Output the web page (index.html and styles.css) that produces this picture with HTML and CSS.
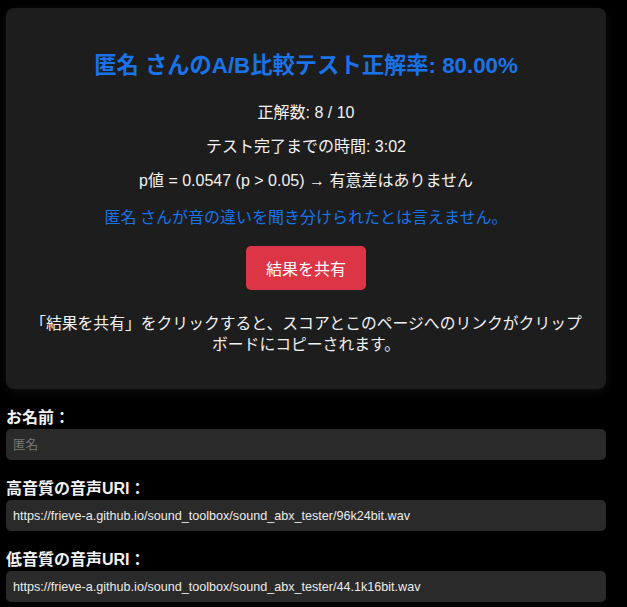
FILE: index.html
```html
<!DOCTYPE html>
<html lang="ja">
<head>
<meta charset="utf-8">
<title>A/B比較テスト</title>
<link rel="stylesheet" href="styles.css">
</head>
<body>
<div class="page">
  <section class="card">
    <h2 class="title">匿名 さんのA/B比較テスト正解率: 80.00%</h2>
    <p class="line">正解数: 8 / 10</p>
    <p class="line">テスト完了までの時間: 3:02</p>
    <p class="line">p値 = 0.0547 (p &gt; 0.05) → 有意差はありません</p>
    <p class="line verdict">匿名 さんが音の違いを聞き分けられたとは言えません。</p>
    <div class="actions"><button class="share">結果を共有</button></div>
    <p class="note">「結果を共有」をクリックすると、スコアとこのページへのリンクがクリップボードにコピーされます。</p>
  </section>
  <div class="field">
    <label class="label">お名前：</label>
    <input class="input" type="text" placeholder="匿名">
  </div>
  <div class="field">
    <label class="label">高音質の音声URI：</label>
    <input class="input" type="text" value="https://frieve-a.github.io/sound_toolbox/sound_abx_tester/96k24bit.wav">
  </div>
  <div class="field">
    <label class="label">低音質の音声URI：</label>
    <input class="input" type="text" value="https://frieve-a.github.io/sound_toolbox/sound_abx_tester/44.1k16bit.wav">
  </div>
</div>
</body>
</html>
```

FILE: styles.css
```css
html, body {
  margin: 0;
  padding: 0;
  background: #000;
}
body {
  font-family: "Liberation Sans", "Noto Sans CJK JP", sans-serif;
  color: #f2f2f2;
}
.page {
  width: 600px;
  padding: 8px 6px 0;
}
.card {
  background: #1d1d1d;
  border-radius: 8px;
  padding: 20px 20px 19px;
  box-shadow: 0 3px 10px rgba(40, 40, 40, 0.35);
  text-align: center;
  margin-bottom: 19px;
}
.title {
  color: #1a73e8;
  font-size: 22.3px;
  line-height: 26px;
  font-weight: bold;
  margin: 25px 0 25px;
}
.line {
  font-size: 16px;
  line-height: 18px;
  margin: 16px 0;
}
.verdict {
  color: #1a73e8;
  font-family: "Noto Sans CJK JP", sans-serif;
  font-size: 16px;
  line-height: 20px;
}
.actions {
  margin: 20px 0 22px;
}
.share {
  background: #dc3545;
  color: #fff;
  border: none;
  border-radius: 5px;
  font-family: "Noto Sans CJK JP", sans-serif;
  font-size: 16px;
  line-height: 24px;
  padding: 10px 20px;
}
.note {
  font-family: "Noto Sans CJK JP", sans-serif;
  font-size: 15.8px;
  line-height: 21px;
  margin: 0 0 16px;
  padding: 0;
}
.field {
  margin-bottom: 19px;
}
.label {
  display: block;
  font-weight: bold;
  font-size: 16px;
  line-height: 19px;
  margin-bottom: 2px;
}
.input {
  display: block;
  box-sizing: border-box;
  width: 100%;
  height: 31px;
  padding: 6px 7px;
  border: none;
  border-radius: 5px;
  background: #2a2a2a;
  color: #ececec;
  font-family: "Liberation Sans", "Noto Sans CJK JP", sans-serif;
  font-size: 12.6px;
  outline: none;
}
.input::placeholder {
  color: #777;
}
```
